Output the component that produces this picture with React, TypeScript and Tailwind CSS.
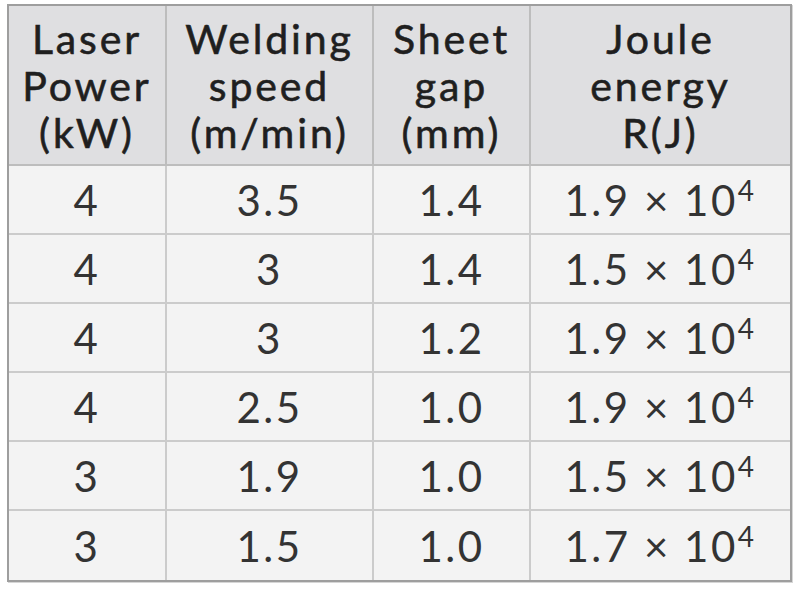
import React from "react";

const headers = [
  ["Laser", "Power", "(kW)"],
  ["Welding", "speed", "(m/min)"],
  ["Sheet", "gap", "(mm)"],
  ["Joule", "energy", "R(J)"],
];

const rows: [string, string, string, string][] = [
  ["4", "3.5", "1.4", "1.9"],
  ["4", "3", "1.4", "1.5"],
  ["4", "3", "1.2", "1.9"],
  ["4", "2.5", "1.0", "1.9"],
  ["3", "1.9", "1.0", "1.5"],
  ["3", "1.5", "1.0", "1.7"],
];

const widths = ["w-[158px]", "w-[207px]", "w-[157px]", "w-[259px]"];

export default function App() {
  return (
    <div className="w-[797px] h-[590px] bg-white pt-[4px] pl-[7px]" style={{ fontFamily: "Lato, 'Open Sans', sans-serif" }}>
      <div className="w-[785px] border-2 border-[#9e9e9e] shadow-[1px_1px_0_#d6d6d6]">
        <table className="w-full table-fixed border-separate border-spacing-0">
          <colgroup>
            {widths.map((w, i) => (
              <col key={i} className={w} />
            ))}
          </colgroup>
          <thead>
            <tr>
              {headers.map((h, i) => (
                <th
                  key={i}
                  className={
                    "h-[160px] bg-[#dfdfe1] border-b-2 border-[#bdbdbd] font-normal text-[#1f1f1f] text-[41px] leading-[47px] tracking-[0.07em] text-center align-middle [-webkit-text-stroke:0.6px_#1f1f1f] " +
                    (i < 3 ? "border-r-2" : "")
                  }
                >
                  {h.map((line, j) => (
                    <div key={j}>{line}</div>
                  ))}
                </th>
              ))}
            </tr>
          </thead>
          <tbody>
            {rows.map((r, ri) => (
              <tr key={ri}>
                {r.map((c, ci) => (
                  <td
                    key={ci}
                    className={
                      "h-[69px] bg-[#f3f3f3] border-[#cbcbcb] text-[#333] text-[42px] tracking-[0.06em] leading-none text-center align-middle " +
                      (ci < 3 ? "border-r-2 " : "") +
                      (ri < rows.length - 1 ? "border-b-2" : "")
                    }
                  >
                    {ci === 3 ? (
                      <span>
                        {c} × 10<sup className="text-[28px] relative -top-[15px]">4</sup>
                      </span>
                    ) : (
                      c
                    )}
                  </td>
                ))}
              </tr>
            ))}
          </tbody>
        </table>
      </div>
    </div>
  );
}
